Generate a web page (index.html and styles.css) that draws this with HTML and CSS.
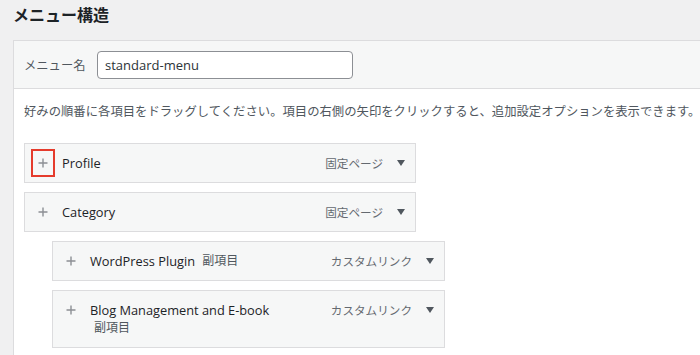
FILE: index.html
```html
<!DOCTYPE html>
<html lang="ja">
  <head>
    <meta charset="UTF-8" />
    <meta name="viewport" content="width=device-width, initial-scale=1.0" />
    <title>メニュー構造</title>
    <link rel="stylesheet" href="styles.css">
  </head>
  <body>
    <h1 class="page-title">メニュー構造</h1>
    <div class="menu-panel">
      <div class="menu-header">
        <label class="menu-name-label" for="menu-name">メニュー名</label>
        <input class="menu-name-input" id="menu-name" type="text" value="standard-menu" />
      </div>
      <div class="menu-body">
        <p class="menu-help">好みの順番に各項目をドラッグしてください。項目の右側の矢印をクリックすると、追加設定オプションを表示できます。</p>
        <ul class="menu-list">
          <li class="menu-item">
            <div class="item-handle">
              <span class="item-toggle is-marked"><svg viewBox="0 0 10 10" width="10" height="10"><path d="M5 0.5v9M0.5 5h9" /></svg></span>
              <span class="item-title"><span class="item-name">Profile</span></span>
              <span class="item-controls"><span class="item-type">固定ページ</span><span class="item-arrow"></span></span>
            </div>
          </li>
          <li class="menu-item">
            <div class="item-handle">
              <span class="item-toggle"><svg viewBox="0 0 10 10" width="10" height="10"><path d="M5 0.5v9M0.5 5h9" /></svg></span>
              <span class="item-title"><span class="item-name">Category</span></span>
              <span class="item-controls"><span class="item-type">固定ページ</span><span class="item-arrow"></span></span>
            </div>
          </li>
          <li class="menu-item sub-item">
            <div class="item-handle">
              <span class="item-toggle"><svg viewBox="0 0 10 10" width="10" height="10"><path d="M5 0.5v9M0.5 5h9" /></svg></span>
              <span class="item-title"><span class="item-name">WordPress Plugin</span> <span class="is-submenu">副項目</span></span>
              <span class="item-controls"><span class="item-type">カスタムリンク</span><span class="item-arrow"></span></span>
            </div>
          </li>
          <li class="menu-item sub-item">
            <div class="item-handle">
              <span class="item-toggle"><svg viewBox="0 0 10 10" width="10" height="10"><path d="M5 0.5v9M0.5 5h9" /></svg></span>
              <span class="item-title"><span class="item-name">Blog Management and E-book</span> <span class="is-submenu">副項目</span></span>
              <span class="item-controls"><span class="item-type">カスタムリンク</span><span class="item-arrow"></span></span>
            </div>
          </li>
          <li class="menu-item sub-item">
            <div class="item-handle"></div>
          </li>
        </ul>
      </div>
    </div>
  </body>
</html>
```

FILE: styles.css
```css
* {
  box-sizing: border-box;
  margin: 0;
  padding: 0;
}

body {
  font-family: 'Open Sans', 'Noto Sans CJK JP', sans-serif;
  background-color: #f0f0f1;
  color: #1d2327;
  overflow: hidden;
}

.page-title {
  font-size: 16px;
  font-weight: bold;
  line-height: 22px;
  padding: 4px 13px 0;
  margin-bottom: 14px;
}

.menu-panel {
  margin-left: 13px;
  width: 720px;
  background-color: #fff;
  border: 1px solid #dcdcde;
}

.menu-header {
  display: flex;
  align-items: center;
  height: 48px;
  padding-left: 10px;
  background-color: #f6f7f7;
  border-bottom: 1px solid #dcdcde;
}

.menu-name-label {
  font-size: 12.3px;
  color: #50575e;
  width: 73px;
}

.menu-name-input {
  width: 256px;
  height: 28px;
  padding: 0 7px;
  border: 1px solid #8c8f94;
  border-radius: 4px;
  font-family: 'Open Sans', sans-serif;
  font-size: 13px;
  color: #2c3338;
  background-color: #fff;
}

.menu-body {
  padding: 14px 10px 0;
}

.menu-help {
  font-size: 12.35px;
  line-height: 18px;
  color: #50575e;
  white-space: nowrap;
  margin-bottom: 22px;
}

.menu-list {
  list-style: none;
}

.menu-item {
  width: 392px;
  margin-bottom: 9px;
}

.menu-item.sub-item {
  width: 393px;
  margin-left: 28px;
}

.item-handle {
  display: flex;
  align-items: flex-start;
  min-height: 40px;
  padding: 10px 10px 10px 6px;
  background-color: #f6f7f7;
  border: 1px solid #dcdcde;
}

.item-toggle {
  display: flex;
  align-items: center;
  justify-content: center;
  width: 24px;
  height: 28px;
  margin: -5px 7px -5px 0;
  flex-shrink: 0;
}

.item-toggle svg path {
  stroke: #8c8f94;
  stroke-width: 1.4;
  fill: none;
}

.item-toggle.is-marked {
  border: 2px solid #e53b2c;
}

.item-title {
  flex: 1;
  max-width: 205px;
  font-size: 12.8px;
  line-height: 18px;
  color: #1d2327;
}

.item-name {
  font-weight: 500;
}

.is-submenu {
  display: inline-block;
  vertical-align: top;
  margin-left: 4px;
  font-size: 12px;
  line-height: 18px;
  height: 18px;
  white-space: nowrap;
  color: #50575e;
}

.item-controls {
  display: flex;
  align-items: center;
  margin-left: auto;
  height: 18px;
}

.item-type {
  font-size: 11.6px;
  color: #646970;
}

.item-arrow {
  margin-left: 14px;
  width: 0;
  height: 0;
  border-left: 4px solid transparent;
  border-right: 4px solid transparent;
  border-top: 6px solid #50575e;
}
```
